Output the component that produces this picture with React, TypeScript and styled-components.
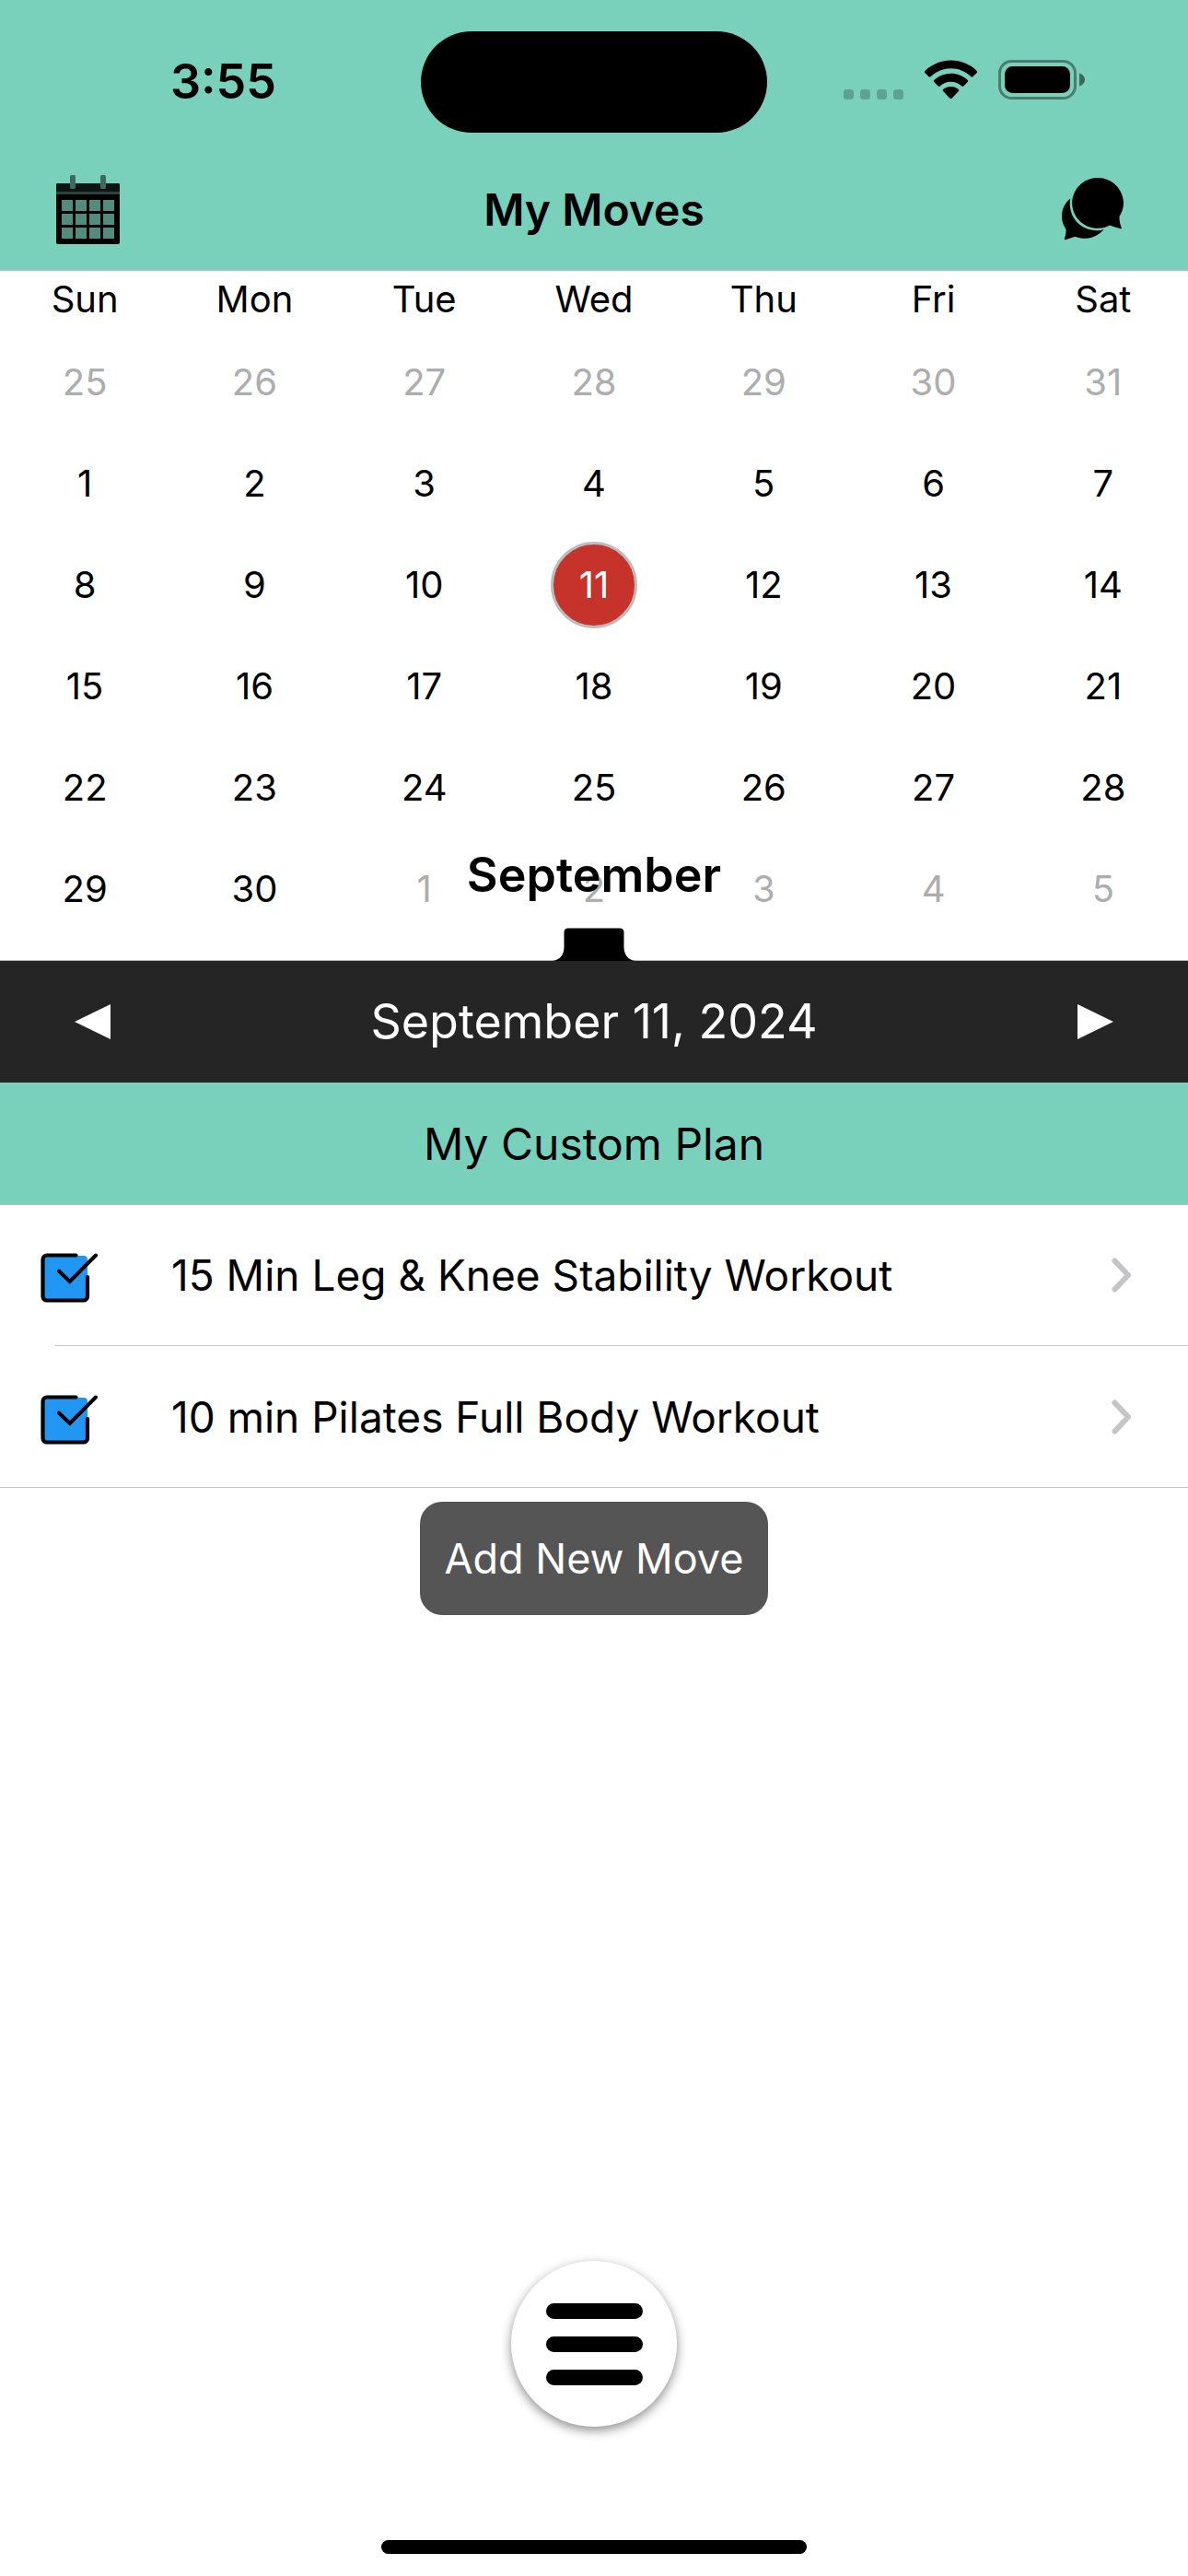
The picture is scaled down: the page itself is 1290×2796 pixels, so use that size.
import React, { useState } from "react";
import styled, { createGlobalStyle } from "styled-components";

const teal = "#79d0bb";
const hairline = "#b9bdbb";

const GlobalStyle = createGlobalStyle`
  *, *::before, *::after { box-sizing: border-box; }
  body {
    margin: 0;
    background: #fff;
    color: #000;
    font-family: Inter, "Liberation Sans", sans-serif;
    -webkit-font-smoothing: antialiased;
  }
  button { font: inherit; color: inherit; background: none; border: 0; padding: 0; cursor: pointer; }
  svg { display: block; }
`;

const Page = styled.div`
  min-height: 100vh;
  display: flex;
  flex-direction: column;
`;

const Header = styled.header`
  background: ${teal};
  border-bottom: 1px solid ${hairline};
`;

const StatusBar = styled.div`
  display: grid;
  grid-template-columns: 1fr 376px 1fr;
  align-items: center;
  padding: 34px 0 0;
`;

const Clock = styled.time`
  padding-left: 28px;
  font-size: 52px;
  line-height: 60px;
  font-weight: 600;
  text-align: center;
`;

const Island = styled.div`
  height: 110px;
  border-radius: 55px;
  background: #000;
`;

const Signals = styled.div`
  display: flex;
  align-items: flex-end;
  justify-content: flex-end;
  gap: 23px;
  padding: 0 112px 6px 0;
`;

const NavBar = styled.div`
  display: grid;
  grid-template-columns: 1fr auto 1fr;
  align-items: center;
  padding: 28px 60px 10px;
`;

const Title = styled.h1`
  margin: 0;
  font-size: 48px;
  line-height: 60px;
  font-weight: 600;
`;

const IconButton = styled.button<{ $end?: boolean }>`
  display: flex;
  height: 111px;
  align-items: center;
  justify-self: ${(p) => (p.$end ? "end" : "start")};
`;

const Calendar = styled.section`
  position: relative;
  padding-bottom: 22px;
  border-bottom: 1px solid ${hairline};
`;

const Grid = styled.table`
  width: 100%;
  table-layout: fixed;
  border-collapse: collapse;
  font-size: 40px;
  line-height: 48px;
`;

const Weekday = styled.th`
  height: 66px;
  padding: 0 0 4px;
  font-weight: 400;
`;

const DayCell = styled.td`
  height: 110px;
  padding: 0;
  text-align: center;
`;

const Day = styled.button<{ $muted: boolean; $selected: boolean }>`
  width: 94px;
  height: 94px;
  border: 3px solid ${(p) => (p.$selected ? "#bdbdbd" : "transparent")};
  border-radius: 50%;
  background: ${(p) => (p.$selected ? "#c6332b" : "transparent")};
  color: ${(p) => (p.$selected ? "#fff" : p.$muted ? "#adadad" : "#000")};
`;

const MonthLabel = styled.h2`
  position: absolute;
  inset: auto 0 60px;
  margin: 0;
  font-size: 52px;
  line-height: 64px;
  font-weight: 600;
  text-align: center;
  pointer-events: none;
`;

const Handle = styled.button`
  position: absolute;
  bottom: -1px;
  left: 50%;
  margin-left: -45px;
`;

const DateBar = styled.div`
  display: flex;
  align-items: center;
  justify-content: space-between;
  height: 132px;
  padding: 0 81px;
  background: #252525;
  color: #fff;
  font-size: 52px;
  line-height: 64px;
`;

const PlanHeading = styled.h2`
  display: flex;
  align-items: center;
  justify-content: center;
  height: 133px;
  margin: 0;
  padding-top: 2px;
  border-bottom: 1px solid ${hairline};
  background: ${teal};
  font-size: 48px;
  line-height: 60px;
  font-weight: 400;
`;

const MoveList = styled.ul`
  margin: 0;
  padding: 0;
  list-style: none;
  border-bottom: 1px solid #c6c6c8;
`;

const MoveRow = styled.li`
  display: flex;
  align-items: center;
  height: 152px;

  & + & {
    height: 154px;
    border-top: 1px solid #c6c6c8;
    border-image: linear-gradient(to right, transparent 60px, #c6c6c8 60px) 1;
  }
`;

const Check = styled.label`
  display: flex;
  padding: 6px 80px 0 44px;
  cursor: pointer;
`;

const CheckInput = styled.input`
  position: absolute;
  width: 60px;
  height: 60px;
  margin: 0;
  opacity: 0;
`;

const MoveLink = styled.a`
  flex: 1;
  display: flex;
  align-items: center;
  justify-content: space-between;
  padding-right: 60px;
  color: inherit;
  font-size: 46px;
  line-height: 56px;
  text-decoration: none;
`;

const AddButton = styled.button`
  && {
    align-self: center;
    margin-top: 15px;
    padding: 32px 26px;
    border-radius: 24px;
    background: #555;
    color: #fff;
    font-size: 45px;
    line-height: 59px;
  }
`;

const Footer = styled.footer`
  display: flex;
  flex-direction: column;
  align-items: center;
  gap: 123px;
  margin-top: auto;
  padding: 60px 0 24px;
`;

const MenuButton = styled.button`
  && {
    display: flex;
    flex-direction: column;
    align-items: center;
    justify-content: center;
    gap: 19px;
    width: 180px;
    height: 180px;
    border-radius: 50%;
    background: #fff;
    box-shadow: 0 4px 12px rgba(0, 0, 0, 0.45);
  }
`;

const MenuLine = styled.span`
  width: 105px;
  height: 17px;
  border-radius: 9px;
  background: #000;
`;

const HomeIndicator = styled.div`
  width: 462px;
  height: 15px;
  border-radius: 8px;
  background: #000;
`;

const SignalDots = () => (
  <svg width="65" height="11" viewBox="0 0 65 11" fill="#000" fillOpacity="0.22">
    {[0, 18, 36, 54].map((x) => (
      <rect key={x} x={x} width="11" height="11" rx="3.5" />
    ))}
  </svg>
);

const WifiIcon = () => (
  <svg width="57" height="43" viewBox="0 0 57 43">
    <path d="M28.500 0.500C39.500 0.500 49.500 4.800 56.700 11.900Q57.600 12.900 56.700 13.900L52.400 18.200Q51.400 19 50.500 18.200C44.700 12.700 37 9.300 28.500 9.300S12.300 12.700 6.500 18.200Q5.600 19 4.600 18.200L0.300 13.900Q-0.600 12.900 0.300 11.900C7.500 4.800 17.500 0.500 28.500 0.500Z" />
    <path d="M28.500 14.800C35.500 14.800 42 17.500 46.800 22Q47.700 23 46.800 24L42.200 28.500Q41.300 29.300 40.300 28.500C37.200 25.500 33 23.700 28.500 23.700S19.800 25.500 16.700 28.500Q15.700 29.300 14.800 28.500L10.200 24Q9.300 23 10.200 22C15 17.500 21.500 14.800 28.500 14.800Z" />
    <path d="M28.500 29C31.700 29 34.600 30.200 36.800 32.100Q37.900 33.100 36.900 34.100L29.500 41.700Q28.500 42.600 27.500 41.700L20.100 34.100Q19.100 33.100 20.200 32.100C22.400 30.200 25.300 29 28.500 29Z" />
  </svg>
);

const BatteryIcon = () => (
  <svg width="94" height="43" viewBox="0 0 94 43">
    <rect x="1.500" y="1.500" width="82" height="40" rx="13" fill="none" stroke="#000" strokeOpacity="0.4" strokeWidth="3" />
    <rect x="7" y="7" width="71" height="29" rx="8.500" />
    <path d="M88 14.500C91.500 15.500 94 18.200 94 21.500S91.500 27.500 88 28.500Z" fillOpacity="0.5" />
  </svg>
);

const CalendarIcon = () => (
  <svg width="71" height="76" viewBox="0 0 71 76">
    <rect x="1" y="9" width="69" height="66" rx="2" />
    <rect x="1" y="9" width="69" height="10" rx="1.500" fill="#0d1514" />
    <rect x="1" y="18" width="69" height="3" fill="#26433d" />
    <rect x="16" y="0" width="6" height="15" rx="1.500" fill="#3d695f" />
    <rect x="49" y="0" width="6" height="15" rx="1.500" fill="#3d695f" />
    {[27, 42, 57].map((y) =>
      [7, 22, 37, 52].map((x) => (
        <rect key={`${x}-${y}`} x={x} y={y} width="12" height="12" fill="#528c7e" />
      ))
    )}
  </svg>
);

const ChatIcon = () => (
  <svg width="77" height="70" viewBox="0 0 77 70">
    <path d="M39 0C54.500 0 67 12.500 67 27.500C67 33 65 38 62.500 42C62.300 46.500 63.300 50.500 64.800 54.200Q65 55.600 63.600 55.200C59.500 54.200 56 52.800 52 51.600C48 53.800 43.800 54.800 39 54.800C23.500 54.800 11.200 42.500 11.200 27.500S23.500 0 39 0Z" />
    <path d="M9.300 22.500C6 40 18 57.500 39 57.200C41 57.200 43 57 45.800 55.800C40 62.500 33 65.800 25.500 65.800C21.500 65.800 18 65.200 14.500 63.700C11 64.700 7.500 66.200 3.800 67.200Q2.600 67.400 2.800 66C4 62.500 4.800 59.500 4.500 56C1.500 51.500 0 47 0 42C0 33.500 3.500 27 9.300 22.500Z" />
  </svg>
);

const CheckIcon = ({ checked }: { checked: boolean }) => (
  <svg width="62" height="54" viewBox="0 0 62 54" fill="none" stroke="#000" strokeWidth="4.200" strokeLinecap="round">
    <rect x="3" y="3" width="48" height="48" rx="4" fill={checked ? "#2196f3" : "#fff"} stroke="none" />
    <path d="M38.500 2.500H7A4.500 4.500 0 0 0 2.500 7V47A4.500 4.500 0 0 0 7 51.500H46.500A4.500 4.500 0 0 0 51 47V26" />
    {checked && <path d="M20 19.500L31.800 31L60 2.500" strokeWidth="4" />}
  </svg>
);

const Arrow = ({ flip }: { flip?: boolean }) => (
  <svg width="39" height="40" viewBox="0 0 39 40" fill="#fff">
    <path d={flip ? "M0 1L39 20L0 39Z" : "M39 1L0 20L39 39Z"} />
  </svg>
);

const Chevron = () => (
  <svg width="23" height="38" viewBox="0 0 23 38" fill="none" stroke="#c5c5c7" strokeWidth="6" strokeLinecap="round" strokeLinejoin="round">
    <path d="M3.500 3.500L18 19L3.500 34.500" />
  </svg>
);

const HandleShape = () => (
  <svg width="90" height="36" viewBox="0 0 90 36">
    <path d="M0 36C8 35 12.500 29 12.500 21V5Q12.500 0.500 17 0.500H73Q77.500 0.500 77.500 5V21C77.500 29 82 35 90 36Z" />
  </svg>
);

const weekdays = ["Sun", "Mon", "Tue", "Wed", "Thu", "Fri", "Sat"];
const firstShown = new Date(2024, 7, 25);
const weeks = Array.from({ length: 6 }, (_, w) =>
  Array.from({ length: 7 }, (_, d) => {
    const date = new Date(firstShown);
    date.setDate(firstShown.getDate() + w * 7 + d);
    return date;
  })
);

const longDate = (d: Date) =>
  d.toLocaleDateString("en-US", { month: "long", day: "numeric", year: "numeric" });

const shift = (d: Date, days: number) =>
  new Date(d.getFullYear(), d.getMonth(), d.getDate() + days);

export default function App() {
  const [selected, setSelected] = useState(new Date(2024, 8, 11));
  const [moves, setMoves] = useState([
    { name: "15 Min Leg & Knee Stability Workout", done: true },
    { name: "10 min Pilates Full Body Workout", done: true },
  ]);
  const toggle = (i: number) =>
    setMoves(moves.map((m, n) => (n === i ? { ...m, done: !m.done } : m)));

  return (
    <Page>
      <GlobalStyle />
      <Header>
        <StatusBar>
          <Clock>3:55</Clock>
          <Island />
          <Signals>
            <SignalDots />
            <WifiIcon />
            <BatteryIcon />
          </Signals>
        </StatusBar>
        <NavBar>
          <IconButton aria-label="Calendar"><CalendarIcon /></IconButton>
          <Title>My Moves</Title>
          <IconButton aria-label="Messages" $end><ChatIcon /></IconButton>
        </NavBar>
      </Header>

      <Calendar>
        <Grid>
          <thead>
            <tr>{weekdays.map((d) => <Weekday key={d} scope="col">{d}</Weekday>)}</tr>
          </thead>
          <tbody>
            {weeks.map((week, w) => (
              <tr key={w}>
                {week.map((date) => (
                  <DayCell key={date.getTime()}>
                    <Day
                      $muted={date.getMonth() !== 8}
                      $selected={date.getTime() === selected.getTime()}
                      onClick={() => setSelected(date)}
                    >
                      {date.getDate()}
                    </Day>
                  </DayCell>
                ))}
              </tr>
            ))}
          </tbody>
        </Grid>
        <MonthLabel>September</MonthLabel>
        <Handle aria-label="Collapse calendar"><HandleShape /></Handle>
      </Calendar>

      <DateBar>
        <button aria-label="Previous day" onClick={() => setSelected(shift(selected, -1))}><Arrow /></button>
        <span>{longDate(selected)}</span>
        <button aria-label="Next day" onClick={() => setSelected(shift(selected, 1))}><Arrow flip /></button>
      </DateBar>
      <PlanHeading>My Custom Plan</PlanHeading>

      <MoveList>
        {moves.map((m, i) => (
          <MoveRow key={m.name}>
            <Check>
              <CheckInput type="checkbox" aria-label={m.name} checked={m.done} onChange={() => toggle(i)} />
              <CheckIcon checked={m.done} />
            </Check>
            <MoveLink href="#move">
              {m.name}
              <Chevron />
            </MoveLink>
          </MoveRow>
        ))}
      </MoveList>
      <AddButton>Add New Move</AddButton>

      <Footer>
        <MenuButton aria-label="Menu"><MenuLine /><MenuLine /><MenuLine /></MenuButton>
        <HomeIndicator />
      </Footer>
    </Page>
  );
}
